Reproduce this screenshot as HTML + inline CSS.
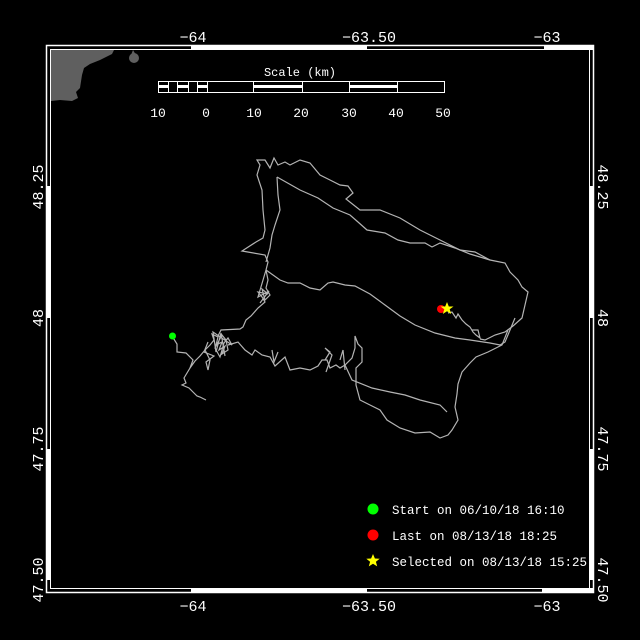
<!DOCTYPE html>
<html><head><meta charset="utf-8"><style>
html,body{margin:0;padding:0;background:#000;width:640px;height:640px;overflow:hidden}
svg{display:block}
text{font-family:"Liberation Mono",monospace;fill:#fff}
</style></head><body>
<svg width="640" height="640" viewBox="0 0 640 640">
<rect width="640" height="640" fill="#000"/>
<polygon points="51,50 114,50 112,54 100,60 90,64 84,68 82,75 80,88 76,92 78,98 72,101 60,100 51,101" fill="#5f5f5f"/>
<circle cx="134" cy="58" r="5" fill="#5f5f5f"/><polygon points="131,55 133,50 136,55" fill="#5f5f5f"/>
<rect x="46.5" y="45.5" width="547" height="547" fill="none" stroke="#fff" stroke-width="1.5"/>
<rect x="50.5" y="49.5" width="539" height="539" fill="none" stroke="#fff" stroke-width="1"/>
<g fill="#fff">
<rect x="191" y="45" width="176" height="5"/><rect x="544" y="45" width="50" height="5"/>
<rect x="191" y="588" width="176" height="5"/><rect x="542" y="588" width="52" height="5"/>
<rect x="46" y="186" width="5" height="132"/><rect x="46" y="449" width="5" height="131"/>
<rect x="589" y="186" width="5" height="132"/><rect x="589" y="449" width="5" height="131"/>
</g>
<g font-size="15" text-anchor="middle">
<text x="193" y="42">−64</text><text x="369" y="42">−63.50</text><text x="547" y="42">−63</text>
<text x="193" y="611">−64</text><text x="369" y="611">−63.50</text><text x="547" y="611">−63</text>
<text transform="translate(43,187) rotate(-90)">48.25</text>
<text transform="translate(43,318) rotate(-90)">48</text>
<text transform="translate(43,449) rotate(-90)">47.75</text>
<text transform="translate(43,580) rotate(-90)">47.50</text>
<text transform="translate(598,187) rotate(90)">48.25</text>
<text transform="translate(598,318) rotate(90)">48</text>
<text transform="translate(598,449) rotate(90)">47.75</text>
<text transform="translate(598,580) rotate(90)">47.50</text>
</g>
<text x="300" y="76" font-size="12" text-anchor="middle">Scale (km)</text>
<rect x="158.5" y="81.5" width="286" height="11" fill="none" stroke="#fff"/>
<g stroke="#fff" stroke-width="1">
<line x1="168.5" y1="81" x2="168.5" y2="92"/><line x1="177.5" y1="81" x2="177.5" y2="92"/>
<line x1="188.5" y1="81" x2="188.5" y2="92"/><line x1="197.5" y1="81" x2="197.5" y2="92"/>
<line x1="207.5" y1="81" x2="207.5" y2="92"/><line x1="253.5" y1="81" x2="253.5" y2="92"/>
<line x1="302.5" y1="81" x2="302.5" y2="92"/><line x1="349.5" y1="81" x2="349.5" y2="92"/>
<line x1="397.5" y1="81" x2="397.5" y2="92"/>
</g>
<g fill="#fff">
<rect x="158" y="85" width="10" height="3"/><rect x="177" y="85" width="11" height="3"/><rect x="197" y="85" width="10" height="3"/>
<rect x="253" y="85" width="49" height="3"/><rect x="349" y="85" width="48" height="3"/>
</g>
<g font-size="13" text-anchor="middle">
<text x="158" y="117">10</text><text x="206" y="117">0</text><text x="254" y="117">10</text>
<text x="301" y="117">20</text><text x="349" y="117">30</text><text x="396" y="117">40</text><text x="443" y="117">50</text>
</g>
<g fill="none" stroke="#b4b4b4" stroke-width="1.2">
<polyline points="172,336 177,344 177,352 186,353 193,360 190,368 184,378 186,383 182,385 189,388 193,392 197,396 200,397 206,400"/>
<polyline points="190,368 195,361 200,356 205,350 210,345 214,340 212,334 218,337 216,345 222,342 219,350 225,346 222,354 228,350 226,340 222,335 215,348 220,357 224,343 228,338 232,345 213,332 216,352 221,333 225,356"/>
<polyline points="205,350 210,360 208,370 206,362 214,356 204,352 208,342"/>
<polyline points="218,336 221,330 240,329 243,327 246,320 251,316 258,308 265,302 262,297 258,292 268,294 262,289 265,300 270,295 266,288 268,280 266,270 258,297 269,291 260,303"/>
<polyline points="266,270 268,262 265,255 242,251 256,242 263,238 265,230 263,210 262,190 257,175 260,165 257,160 265,160 270,168 274,158 278,165 285,162 290,165 300,160 310,163 320,175 330,180 340,185 348,186 353,193 346,199 360,210 380,210 400,218 420,230 440,240 460,250 475,252 490,260 505,263 510,272 518,280 522,287 528,292 525,305 522,318 513,326 505,332 495,335 485,340 480,339"/>
<polyline points="277,177 300,190 318,198 333,208 350,215 358,222 367,230 385,233 398,240 410,243 425,243 432,247 440,243 455,248 470,254 490,260"/>
<polyline points="277,177 278,195 280,210 275,225 272,235 270,248 266,262"/>
<polyline points="266,270 280,280 288,283 300,283 310,288 320,290 328,283 333,282 345,285 355,286 370,294 385,305 400,316 415,325 435,333 455,338 470,340 490,343 500,345 505,342 510,330 515,318"/>
<polyline points="228,345 238,342 245,350 252,355 255,350 262,355 270,357 275,366 285,357 290,370 300,368 310,370 318,366 322,360 327,360 330,368 336,365 340,368 345,365 352,358 355,348 355,336 358,344 362,348 362,362 356,368 356,385 360,400 370,405 380,410 387,420 400,428 415,433 430,432 440,438 448,435 452,430 458,420 455,407 457,394 458,384 462,372 470,363 476,357 488,352 502,345 508,330"/>
<polyline points="345,365 352,380 372,388 390,392 405,395 420,400 440,405 447,412"/>
<polyline points="448,313 452,312 456,318 458,314 462,320 466,324 470,327 473,332 476,335 480,338 478,330 472,330"/>
<polyline points="325,360 330,352 325,348 332,355 326,372"/>
<polyline points="340,360 343,350 345,370"/>
<polyline points="272,350 274,362 278,352"/>
</g>
<circle cx="172.5" cy="336" r="3.5" fill="#00ff00"/>
<circle cx="441" cy="309" r="4" fill="#ff0000"/>
<polygon points="447,302 448.8,306.5 453.5,306.5 449.7,309.3 451.2,314 447,311.2 442.8,314 444.3,309.3 440.5,306.5 445.2,306.5" fill="#ffff00"/>
<circle cx="373" cy="509" r="5.5" fill="#00ff00"/>
<circle cx="373" cy="535" r="5.5" fill="#ff0000"/>
<polygon points="373,554 374.9,558.5 379.7,558.7 375.9,561.7 377.2,566.4 373,563.7 368.8,566.4 370.1,561.7 366.3,558.7 371.1,558.5" fill="#ffff00"/>
<g font-size="12.5">
<text x="392" y="514">Start on 06/10/18 16:10</text>
<text x="392" y="540">Last on 08/13/18 18:25</text>
<text x="392" y="566">Selected on 08/13/18 15:25</text>
</g>
</svg>
</body></html>
